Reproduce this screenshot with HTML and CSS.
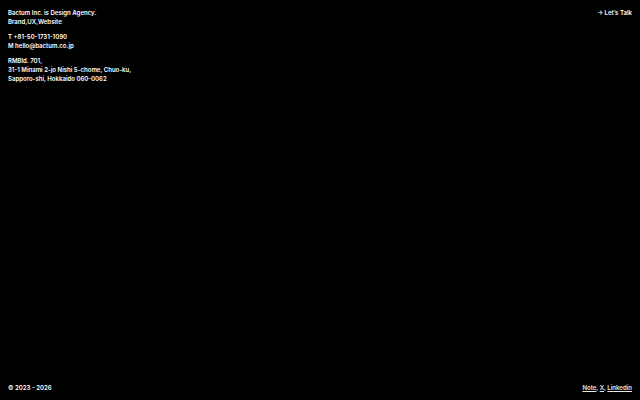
FILE: index.html
```html
<!DOCTYPE html>
<html>
<head>
<meta charset="utf-8">
<link rel="stylesheet" href="styles.css">
</head>
<body>
<div class="page">
  <header class="top">
    <div class="info">
      <p class="block">Bactum Inc. is Design Agency.<br>Brand,UX,Website</p>
      <p class="block">T +81-50-1731-1090<br>M hello@bactum.co.jp</p>
      <p class="block">RMBld. 701,<br>31-1 Minami 2-jo Nishi 5-chome, Chuo-ku,<br>Sapporo-shi, Hokkaido 060-0062</p>
    </div>
    <a class="talk" href="#">→ Let’s Talk</a>
  </header>
  <footer class="bottom">
    <span class="copy">© 2023 - 2026</span>
    <nav class="links"><a href="#">Note</a>, <a href="#">X</a>, <a href="#">Linkedin</a></nav>
  </footer>
</div>
</body>
</html>
```
FILE: styles.css
```css
html, body {
  margin: 0;
  padding: 0;
  background: #000;
}
body {
  font-family: Inter, "Noto Sans", sans-serif;
  font-size: 6.05px;
  font-weight: 600;
  line-height: 9px;
  color: #fff;
}
.page {
  height: 400px;
  box-sizing: border-box;
  padding: 8px;
  display: flex;
  flex-direction: column;
  justify-content: space-between;
}
.top {
  display: flex;
  justify-content: space-between;
  align-items: flex-start;
}
.info {
  display: flex;
  flex-direction: column;
  gap: 6px;
}
.block {
  margin: 0;
}
a {
  color: #fff;
}
.talk {
  text-decoration: none;
}
.bottom {
  display: flex;
  justify-content: space-between;
  align-items: flex-end;
}
.links {
  color: #e6e6e6;
}
.links a {
  color: #e6e6e6;
  text-decoration: underline;
}
```
